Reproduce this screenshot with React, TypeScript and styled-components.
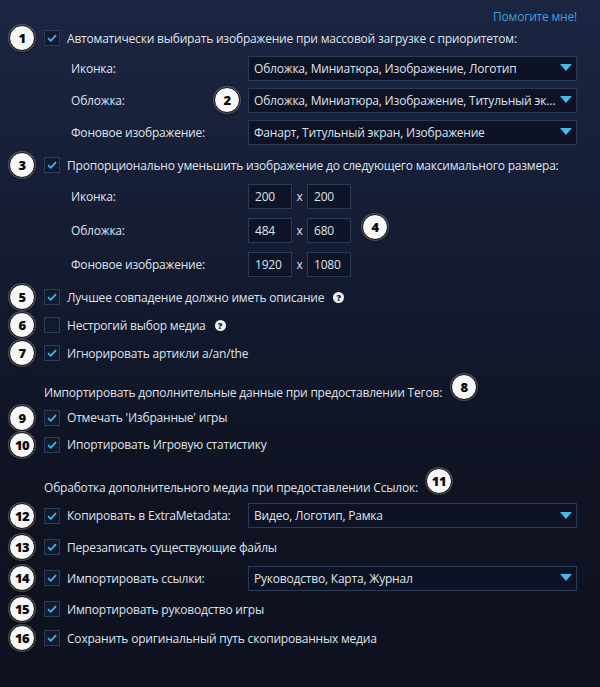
import React from "react";
import styled, { createGlobalStyle } from "styled-components";

const Global = createGlobalStyle`
  html, body { margin: 0; padding: 0; }
  body {
    width: 600px;
    height: 687px;
    overflow: hidden;
    background: linear-gradient(180deg, #1c2542 0%, #151c33 35%, #0f1322 70%, #0e1220 100%);
    font-family: "Open Sans", "Noto Sans", sans-serif;
    color: #dfe3ea;
  }
`;

const Page = styled.div`
  display: flex;
  flex-direction: column;
  padding: 0 23px 0 9px;
  font-size: 12px;
  letter-spacing: -0.2px;
`;

const HelpRow = styled.div`
  display: flex;
  justify-content: flex-end;
  height: 24px;
  padding-top: 9px;
  box-sizing: border-box;
  line-height: 16px;
`;

const HelpLink = styled.span`
  color: #3f9fdc;
  font-size: 12px;
`;

const Row = styled.div<{ $h: number; $mt?: number }>`
  display: flex;
  align-items: center;
  height: ${(p) => p.$h}px;
  margin-top: ${(p) => p.$mt ?? 0}px;
  flex-shrink: 0;
`;

const Gutter = styled.div`
  width: 26px;
  margin-right: 9px;
  display: flex;
  justify-content: center;
  flex-shrink: 0;
`;

const Badge = styled.div<{ $dy?: number }>`
  position: relative;
  top: ${(p) => p.$dy ?? 0}px;
  width: 24px;
  height: 24px;
  border-radius: 50%;
  background: #f7f7f7;
  border: 1.5px solid #0a0a0a;
  box-shadow: 0 0 0 1px rgba(255, 255, 255, 0.25), 0 1px 3px rgba(0, 0, 0, 0.6);
  display: flex;
  align-items: center;
  justify-content: center;
  font-family: "Noto Sans", "DejaVu Sans", sans-serif;
  font-weight: 900;
  font-size: 13px;
  color: #0b0b0b;
  letter-spacing: -0.5px;
  flex-shrink: 0;
`;

const InlineBadge = styled(Badge)<{ $ml: number }>`
  margin-left: ${(p) => p.$ml}px;
`;

const Box = styled.div`
  width: 16px;
  height: 16px;
  box-sizing: border-box;
  border: 1px solid #2c3d58;
  background: #121a2e;
  display: flex;
  align-items: center;
  justify-content: center;
  margin-right: 7px;
  flex-shrink: 0;
`;

const Label = styled.span`
  white-space: nowrap;
`;

const Heading = styled.span`
  white-space: nowrap;
`;

const FixedLabel = styled.div<{ $w: number }>`
  width: ${(p) => p.$w}px;
  flex-shrink: 0;
  display: flex;
  align-items: center;
  justify-content: space-between;
  white-space: nowrap;
`;

const SubRow = styled(Row)`
  padding-left: 62px;
`;

const Select = styled.div`
  flex: 1;
  min-width: 0;
  height: 25px;
  box-sizing: border-box;
  border: 1px solid #2a3b57;
  background: #0d1325;
  display: flex;
  align-items: center;
  padding: 0 4px 0 5px;
  gap: 3px;
`;

const SelectText = styled.span`
  flex: 1;
  min-width: 0;
  overflow: hidden;
  text-overflow: ellipsis;
  white-space: nowrap;
`;

const Arrow = styled.svg`
  width: 12px;
  height: 8px;
  flex-shrink: 0;
`;

const NumInput = styled.div`
  width: 44px;
  height: 25px;
  box-sizing: border-box;
  border: 1px solid #2a3b57;
  background: #0f1528;
  display: flex;
  align-items: center;
  padding-left: 6px;
`;

const Times = styled.span`
  width: 15px;
  text-align: center;
`;

const Help = styled.span`
  width: 11px;
  height: 11px;
  border-radius: 50%;
  background: #f2f2f2;
  color: #0d1220;
  font-family: "Noto Sans", sans-serif;
  font-weight: 900;
  font-size: 9px;
  line-height: 11px;
  text-align: center;
  letter-spacing: 0;
  margin-left: 9px;
  flex-shrink: 0;
`;

const Check = () => (
  <svg width="10" height="8" viewBox="0 0 10 8">
    <path d="M1 4.2 L3.8 6.8 L9 1.2" fill="none" stroke="#3fb4ee" strokeWidth="1.8" />
  </svg>
);

const CheckBox = ({ on }: { on: boolean }) => <Box>{on ? <Check /> : null}</Box>;

const Dropdown = ({ text }: { text: string }) => (
  <Select>
    <SelectText>{text}</SelectText>
    <Arrow viewBox="0 0 12 8">
      <path d="M0 0 H12 L6 7 Z" fill="#4ab7ef" />
    </Arrow>
  </Select>
);

type CheckRowProps = {
  n: number;
  on?: boolean;
  text: string;
  h: number;
  mt?: number;
  help?: boolean;
  labelWidth?: number;
  select?: string;
};

const CheckRow = ({ n, on = true, text, h, mt, help, labelWidth, select }: CheckRowProps) => (
  <Row $h={h} $mt={mt}>
    <Gutter>
      <Badge>{n}</Badge>
    </Gutter>
    <CheckBox on={on} />
    {labelWidth ? (
      <FixedLabel $w={labelWidth}>{text}</FixedLabel>
    ) : (
      <Label>{text}</Label>
    )}
    {help && <Help>?</Help>}
    {select && <Dropdown text={select} />}
  </Row>
);

const SizeRow = ({ label, a, b, badge }: { label: string; a: string; b: string; badge?: number }) => (
  <SubRow $h={34}>
    <FixedLabel $w={177}>{label}</FixedLabel>
    <NumInput>{a}</NumInput>
    <Times>x</Times>
    <NumInput>{b}</NumInput>
    {badge && (
      <InlineBadge $ml={11} $dy={-3}>
        {badge}
      </InlineBadge>
    )}
  </SubRow>
);

export default function App() {
  return (
    <>
      <Global />
      <Page>
        <HelpRow>
          <HelpLink>Помогите мне!</HelpLink>
        </HelpRow>

        <CheckRow n={1} h={28} text="Автоматически выбирать изображение при массовой загрузке с приоритетом:" />
        <SubRow $h={32}>
          <FixedLabel $w={177}>Иконка:</FixedLabel>
          <Dropdown text="Обложка, Миниатюра, Изображение, Логотип" />
        </SubRow>
        <SubRow $h={32}>
          <FixedLabel $w={177}>
            Обложка:
            <Badge style={{ marginRight: 8 }}>2</Badge>
          </FixedLabel>
          <Dropdown text="Обложка, Миниатюра, Изображение, Титульный экран, Логотип" />
        </SubRow>
        <SubRow $h={32}>
          <FixedLabel $w={177}>Фоновое изображение:</FixedLabel>
          <Dropdown text="Фанарт, Титульный экран, Изображение" />
        </SubRow>

        <CheckRow n={3} h={28} mt={3} text="Пропорционально уменьшить изображение до следующего максимального размера:" />
        <SizeRow label="Иконка:" a="200" b="200" />
        <SizeRow label="Обложка:" a="484" b="680" badge={4} />
        <SizeRow label="Фоновое изображение:" a="1920" b="1080" />

        <CheckRow n={5} h={28} mt={2} help text="Лучшее совпадение должно иметь описание" />
        <CheckRow n={6} h={28} on={false} help text="Нестрогий выбор медиа" />
        <CheckRow n={7} h={28} text="Игнорировать артикли a/an/the" />

        <Row $h={24} $mt={13}>
          <Gutter />
          <Heading>Импортировать дополнительные данные при предоставлении Тегов:</Heading>
          <InlineBadge $ml={9} $dy={-5}>
            8
          </InlineBadge>
        </Row>
        <CheckRow n={9} h={27} text="Отмечать 'Избранные' игры" />
        <CheckRow n={10} h={27} text="Ипортировать Игровую статистику" />

        <Row $h={24} $mt={17}>
          <Gutter />
          <Heading>Обработка дополнительного медиа при предоставлении Ссылок:</Heading>
          <InlineBadge $ml={8} $dy={-6}>
            11
          </InlineBadge>
        </Row>
        <CheckRow n={12} h={33} labelWidth={181} text="Копировать в ExtraMetadata:" select="Видео, Логотип, Рамка" />
        <CheckRow n={13} h={30} text="Перезаписать существующие файлы" />
        <CheckRow n={14} h={32} labelWidth={181} text="Импортировать ссылки:" select="Руководство, Карта, Журнал" />
        <CheckRow n={15} h={30} text="Импортировать руководство игры" />
        <CheckRow n={16} h={28} text="Сохранить оригинальный путь скопированных медиа" />
      </Page>
    </>
  );
}
